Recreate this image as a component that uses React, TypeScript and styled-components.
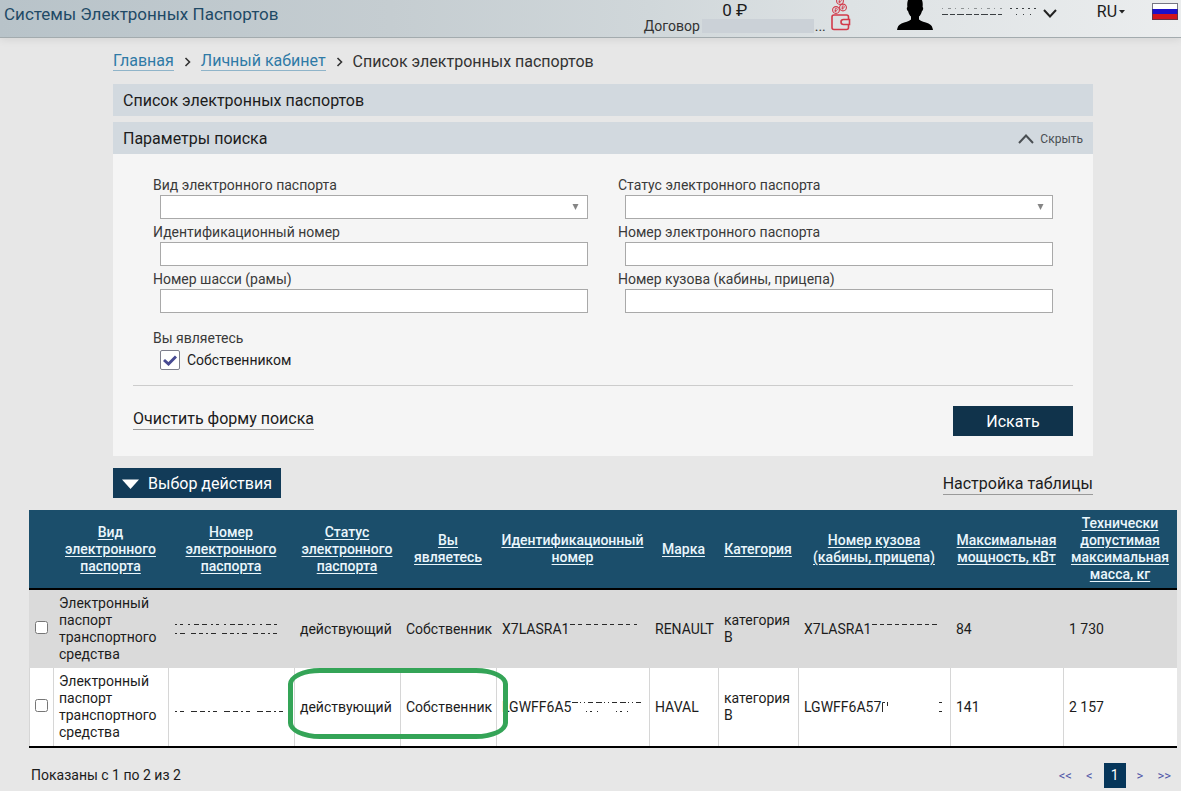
import React, { useId } from 'react';
import styled, { createGlobalStyle } from 'styled-components';

const GlobalStyle = createGlobalStyle`
  *, *::before, *::after { box-sizing: border-box; }
  body {
    margin: 0;
    background: #e7e7e7;
    color: #1c1c1c;
    font: 14px/17px Roboto, "Liberation Sans", sans-serif;
  }
  button, input, select { font: inherit; color: inherit; margin: 0; }
  a { color: inherit; text-decoration: none; }
`;

const Header = styled.header`
  display: flex;
  align-items: flex-start;
  height: 38px;
  border-bottom: 1px solid #a3abae;
  background: linear-gradient(90deg, #b8c3c9 0%, #c5cdd1 33%, #d0d7da 55%, #dde2e4 72%, #ebedee 100%);
  box-shadow: 0 2px 8px rgba(0, 0, 0, 0.08);
`;

const Brand = styled.div`
  flex: 1;
  padding: 4px 0 0 4px;
  font-size: 17px;
  line-height: 20px;
  color: #1f4a66;
`;

const Account = styled.div`
  display: flex;
  flex-direction: column;
  align-items: center;
  width: 182px;
  margin-right: 5px;
`;

const Balance = styled.div`
  font-size: 17px;
  line-height: 18px;
  padding-top: 1px;
`;

const Contract = styled.div`
  display: flex;
  width: 100%;
  color: #333;
  line-height: 14px;
`;

const ContractMask = styled.span`
  flex: 1;
  height: 14px;
  margin: 0 1px 0 2px;
  background: #cbd1d7;
`;

const WalletButton = styled.button`
  padding: 0;
  border: 0;
  background: none;
  margin-right: 46px;
  svg { display: block; }
`;

const UserButton = styled.button`
  display: flex;
  align-items: flex-start;
  padding: 0;
  border: 0;
  background: none;
  margin-right: 40px;
  svg { display: block; }
`;

const NameTrace = styled.span`
  margin: 6px 7px 0 9px;
`;

const ChevronBox = styled.span`
  margin-top: 9px;
`;

const Language = styled.button`
  display: flex;
  align-items: center;
  gap: 2px;
  padding: 2px 0 0;
  border: 0;
  background: none;
  font-size: 16px;
  line-height: 20px;
  margin-right: 27px;
`;

const Flag = styled.svg`
  display: block;
  margin: 3px 3px 0 0;
`;

const Content = styled.main`
  padding: 0 88px 0 113px;
`;

const Breadcrumbs = styled.nav`
  display: flex;
  align-items: center;
  gap: 10px;
  height: 46px;
  padding-top: 1px;
  font-size: 16px;
  line-height: 18px;
  color: #333;
`;

const Crumb = styled.a`
  color: #2f7aa6;
  border-bottom: 1px solid #8fb4c9;
`;

const TitleBar = styled.div`
  display: flex;
  align-items: center;
  justify-content: space-between;
  height: 32px;
  padding: 2px 10px 0;
  margin-bottom: 6px;
  background: #d2d9df;
`;

const PanelBar = styled(TitleBar)`
  margin-bottom: 0;
`;

const Heading = styled.h2`
  margin: 0;
  font-size: 16px;
  line-height: 20px;
  font-weight: 400;
`;

const HideButton = styled.button`
  display: flex;
  align-items: center;
  gap: 6px;
  padding: 0;
  border: 0;
  background: none;
  font-size: 12px;
  color: #4a4f53;
`;

const Panel = styled.form`
  padding: 18px 20px 20px;
  background: #f5f5f5;
`;

const Fields = styled.div`
  display: grid;
  grid-template-columns: 1fr 1fr;
  column-gap: 30px;
  padding: 0 20px;
`;

const FieldBox = styled.div`
  padding-top: 3px;
`;

const FieldLabel = styled.label`
  display: block;
  line-height: 20px;
  color: #3a3a3a;
`;

const Control = styled.div`
  position: relative;
  margin-left: 7px;
  height: 24px;
`;

const TextInput = styled.input`
  display: block;
  width: 100%;
  height: 24px;
  padding: 0 6px;
  border: 1px solid #a9a9a9;
  border-radius: 0;
  background: #fff;
`;

const Select = styled.select`
  display: block;
  width: 100%;
  height: 24px;
  padding: 0 24px 0 6px;
  border: 1px solid #a9a9a9;
  border-radius: 0;
  background: #fff;
  appearance: none;
`;

const SelectArrow = styled.svg`
  position: absolute;
  right: 9px;
  top: 9px;
  pointer-events: none;
`;

const Role = styled.fieldset`
  margin: 0;
  padding: 15px 20px 15px;
  border: 0;
  border-bottom: 1px solid #ccc;
`;

const RoleTitle = styled.div`
  line-height: 20px;
  color: #3a3a3a;
  margin-bottom: 2px;
`;

const CheckLabel = styled.label`
  display: flex;
  align-items: center;
  gap: 7px;
  margin-left: 7px;
`;

const CheckWrap = styled.span`
  display: grid;
  > * { grid-area: 1 / 1; }
  svg { place-self: center; pointer-events: none; }
  input:not(:checked) + svg { visibility: hidden; }
`;

const BigCheck = styled.input`
  width: 20px;
  height: 20px;
  appearance: none;
  border: 1px solid #7d7f8c;
  border-radius: 2px;
  background: #fff;
`;

const PanelActions = styled.div`
  display: flex;
  justify-content: space-between;
  align-items: flex-start;
  padding-top: 20px;
`;

const TextLink = styled.a`
  font-size: 16px;
  line-height: 20px;
  border-bottom: 1px solid #9a9a9a;
`;

const ClearLink = styled(TextLink)`
  margin-top: 3px;
`;

const SearchButton = styled.button`
  width: 120px;
  height: 30px;
  padding: 2px 0 0;
  border: 0;
  background: #10334b;
  color: #fff;
  font-size: 16px;
  line-height: 20px;
`;

const Toolbar = styled.div`
  display: flex;
  justify-content: space-between;
  align-items: center;
  padding: 12px 0;
`;

const TableLink = styled(TextLink)`
  margin-top: 2px;
`;

const ActionButton = styled.button`
  display: flex;
  align-items: center;
  justify-content: center;
  gap: 9px;
  width: 168px;
  height: 30px;
  padding: 2px 0 0;
  border: 0;
  background: #123b58;
  color: #fff;
  font-size: 16px;
  line-height: 20px;
`;

const TableArea = styled.section`
  padding: 0 4px 0 29px;
`;

const Table = styled.table`
  width: 100%;
  table-layout: fixed;
  border-collapse: separate;
  border-spacing: 0;
  border-bottom: 2px solid #000;
`;

const Col = styled.col<{ $w: number }>`
  width: ${p => p.$w}px;
`;

const Th = styled.th`
  height: 80px;
  padding: 5px;
  border-bottom: 2px solid #000;
  background: #1b4e6b;
  color: #eaf6fc;
  font-weight: 500;
  text-align: center;
  vertical-align: middle;
  a { text-decoration: underline; text-underline-offset: 2px; }
`;

const Row = styled.tr<{ $shaded?: boolean }>`
  background: ${p => (p.$shaded ? '#dadada' : '#fff')};
  td { border-left: 1px solid ${p => (p.$shaded ? 'transparent' : '#d6d6d6')}; }
`;

const Td = styled.td`
  position: relative;
  height: 78px;
  padding: 5px 0 5px 5px;
  vertical-align: middle;
`;

const CheckTd = styled(Td)`
  padding: 0;
  text-align: center;
  input { display: block; width: 13px; height: 13px; margin: 0 auto 4px; }
`;

const Value = styled.span`
  display: flex;
  align-items: center;
`;

const Highlight = styled.span`
  position: absolute;
  z-index: 1;
  left: -7px;
  right: -108px;
  top: 0;
  bottom: 7px;
  border: 5px solid #34a457;
  border-radius: 32px / 16px;
  pointer-events: none;
`;

const Footer = styled.footer`
  display: flex;
  justify-content: space-between;
  align-items: center;
  padding: 15px 6px 3px 2px;
`;

const Pager = styled.nav`
  display: flex;
  align-items: center;
  gap: 14px;
  font-size: 13px;
  color: #5157a8;
`;

const CurrentPage = styled.a`
  width: 22px;
  height: 25px;
  margin: 0 -3px;
  background: #06365a;
  color: #fff;
  font-size: 14px;
  line-height: 25px;
  text-align: center;
`;

/* Remains of a masked value: broken strokes along the top and the bottom of the line. */
function Trace({ width, top, bottom }: { width: number; top?: string; bottom?: string }) {
  return (
    <svg width={width} height="12" fill="none" stroke="#2a2a2a" aria-hidden="true">
      {top && <path d={`M1 1.5H${width}`} strokeDasharray={top} />}
      {bottom && <path d={`M1 10.5H${width}`} strokeDasharray={bottom} />}
    </svg>
  );
}

function Field({ label, select }: { label: string; select?: boolean }) {
  const id = useId();
  return (
    <FieldBox>
      <FieldLabel htmlFor={id}>{label}</FieldLabel>
      <Control>
        {select ? (
          <>
            <Select id={id}><option value="" /></Select>
            <SelectArrow width="7" height="6" fill="#858585"><path d="M0.5 0h6L3.5 6z" /></SelectArrow>
          </>
        ) : (
          <TextInput id={id} type="text" />
        )}
      </Control>
    </FieldBox>
  );
}

const Separator = () => (
  <svg width="7" height="10" fill="none" stroke="#333" strokeWidth="1.6" aria-hidden="true">
    <path d="M1.5 1l4 4-4 4" />
  </svg>
);

const Coin = ({ x, y }: { x: number; y: number }) => (
  <g transform={`translate(${x} ${y})`}>
    <circle r="3.4" strokeWidth="1.1" />
    <path d="M-0.7 2V-1.6H0.4a1 1 0 0 1 0 2H-1.3M-1.3 1.2H0.5" strokeWidth="0.8" />
  </g>
);

const columns: { title: string; width: number }[] = [
  { title: 'Вид электронного паспорта', width: 115 },
  { title: 'Номер электронного паспорта', width: 126 },
  { title: 'Статус электронного паспорта', width: 106 },
  { title: 'Вы являетесь', width: 96 },
  { title: 'Идентификационный номер', width: 153 },
  { title: 'Марка', width: 69 },
  { title: 'Категория', width: 80 },
  { title: 'Номер кузова (кабины, прицепа)', width: 152 },
  { title: 'Максимальная мощность, кВт', width: 113 },
  { title: 'Технически допустимая максимальная масса, кг', width: 114 },
];

type Passport = {
  number: React.ReactNode;
  vin: React.ReactNode;
  brand: string;
  body: React.ReactNode;
  power: string;
  mass: string;
  marked?: boolean;
};

const passports: Passport[] = [
  {
    number: <Trace width={103} top="2 3 3 5 2 4 5 3 5 4" bottom="2 3 5 6 5 3 4 3" />,
    vin: <>X7LASRA1<Trace width={68} top="5 3 4 4" /></>,
    brand: 'RENAULT',
    body: <>X7LASRA1<Trace width={68} top="5 3 4 3" /></>,
    power: '84',
    mass: '1 730',
  },
  {
    number: <Trace width={112} bottom="2 3 4 7 6 3 5 3" />,
    vin: <>LGWFF6A5<Trace width={70} top="6 2 1 3 1 3 5 3" bottom="0 14 1 3 2 5 1 4" /></>,
    brand: 'HAVAL',
    body: (
      <>
        LGWFF6A57
        <svg width="64" height="12" fill="none" stroke="#2a2a2a" aria-hidden="true">
          <path d="M1.500 11V1.500h2.500M6.500 1v4M58 1.500h3M58 10.500h3" />
        </svg>
      </>
    ),
    power: '141',
    mass: '2 157',
    marked: true,
  },
];

export default function App() {
  return (
    <>
      <GlobalStyle />
      <Header>
        <Brand>Системы Электронных Паспортов</Brand>
        <Account>
          <Balance>0 ₽</Balance>
          <Contract>Договор<ContractMask />...</Contract>
        </Account>
        <WalletButton type="button" aria-label="Пополнить счёт">
          <svg width="20" height="32" viewBox="0 0 20 32" fill="none" stroke="#d23a4a">
            <Coin x={9} y={1} />
            <Coin x={5} y={10} />
            <Coin x={12} y={7.5} />
            <path d="M17.5 19v-2a2 2 0 0 0-2-2H3a2 2 0 0 0-2 2v10.500a2 2 0 0 0 2 2h12.500a2 2 0 0 0 2-2V25" strokeWidth="1.600" />
            <path d="M18.500 19.500h-6a2.500 2.500 0 0 0 0 5h6z" strokeWidth="1.600" />
          </svg>
        </WalletButton>
        <UserButton type="button" aria-label="Меню пользователя">
          <svg width="36" height="30" viewBox="0 0 36 30" fill="#000">
            <path d="M11 0h14c1 3 .8 5 .6 7 1 .6.8 3-.8 4.500-.6 2.500-1.600 4-2.800 5v3c2 2 6 2.500 9.500 4 3 1.300 4 3.500 4.500 6.500H0c.5-3 1.500-5.200 4.500-6.500C8 22 12 21.500 14 19.500v-3c-1.200-1-2.200-2.500-2.800-5C9.600 10 9.400 7.600 10.400 7 10.200 5 10 3 11 0z" />
          </svg>
          <NameTrace>
            <svg width="94" height="12" fill="none" stroke="#3a3f42" aria-hidden="true">
              <path d="M0 2.500h60" strokeDasharray="1 5 3 4" strokeOpacity="0.5" />
              <path d="M0 8.500h60" strokeDasharray="6 2 5 2 7 2" />
              <path d="M68 2.500h26" strokeDasharray="2 4" />
              <path d="M74 8.500h20" strokeDasharray="1 6" />
            </svg>
          </NameTrace>
          <ChevronBox>
            <svg width="14" height="9" fill="none" stroke="#222" strokeWidth="2"><path d="M1 1l6 6.500L13 1" /></svg>
          </ChevronBox>
        </UserButton>
        <Language type="button">
          RU
          <svg width="6" height="4" fill="#222"><path d="M0 0h6L3 3.500z" /></svg>
        </Language>
        <Flag width="26" height="17" role="img" aria-label="Россия">
          <rect width="26" height="17" fill="#fff" />
          <rect y="6" width="26" height="6" fill="#1d10c8" />
          <rect y="11" width="26" height="6" fill="#d2151c" />
          <rect x="0.5" y="0.5" width="25" height="16" fill="none" stroke="#3c3c50" strokeOpacity="0.7" />
        </Flag>
      </Header>

      <Content>
        <Breadcrumbs>
          <Crumb href="#">Главная</Crumb>
          <Separator />
          <Crumb href="#">Личный кабинет</Crumb>
          <Separator />
          <span>Список электронных паспортов</span>
        </Breadcrumbs>

        <TitleBar><Heading>Список электронных паспортов</Heading></TitleBar>
        <PanelBar>
          <Heading>Параметры поиска</Heading>
          <HideButton type="button">
            <svg width="16" height="10" fill="none" stroke="#4a4f53" strokeWidth="2"><path d="M1 9l7-7.500L15 9" /></svg>
            Скрыть
          </HideButton>
        </PanelBar>

        <Panel onSubmit={e => e.preventDefault()}>
          <Fields>
            <Field label="Вид электронного паспорта" select />
            <Field label="Статус электронного паспорта" select />
            <Field label="Идентификационный номер" />
            <Field label="Номер электронного паспорта" />
            <Field label="Номер шасси (рамы)" />
            <Field label="Номер кузова (кабины, прицепа)" />
          </Fields>
          <Role>
            <RoleTitle>Вы являетесь</RoleTitle>
            <CheckLabel>
              <CheckWrap>
                <BigCheck type="checkbox" defaultChecked />
                <svg width="14" height="11" fill="none" stroke="#474a92" strokeWidth="3"><path d="M1 5l4.500 4L13 1.500" /></svg>
              </CheckWrap>
              Собственником
            </CheckLabel>
          </Role>
          <PanelActions>
            <ClearLink href="#">Очистить форму поиска</ClearLink>
            <SearchButton type="submit">Искать</SearchButton>
          </PanelActions>
        </Panel>

        <Toolbar>
          <ActionButton type="button">
            <svg width="17" height="10" fill="#fff"><path d="M0 0.500h17L8.500 10z" /></svg>
            Выбор действия
          </ActionButton>
          <TableLink href="#">Настройка таблицы</TableLink>
        </Toolbar>
      </Content>

      <TableArea>
        <Table>
          <colgroup>
            <Col $w={24} />
            {columns.map(c => <Col key={c.title} $w={c.width} />)}
          </colgroup>
          <thead>
            <tr>
              <Th aria-label="Выбор" />
              {columns.map(c => <Th key={c.title} scope="col"><a href="#">{c.title}</a></Th>)}
            </tr>
          </thead>
          <tbody>
            {passports.map((p, i) => (
              <Row key={p.brand} $shaded={i % 2 === 0}>
                <CheckTd><input type="checkbox" aria-label={p.brand} /></CheckTd>
                <Td>Электронный паспорт транспортного средства</Td>
                <Td><Value>{p.number}</Value></Td>
                <Td>действующий{p.marked && <Highlight />}</Td>
                <Td>Собственник</Td>
                <Td><Value>{p.vin}</Value></Td>
                <Td>{p.brand}</Td>
                <Td>категория В</Td>
                <Td><Value>{p.body}</Value></Td>
                <Td>{p.power}</Td>
                <Td>{p.mass}</Td>
              </Row>
            ))}
          </tbody>
        </Table>
        <Footer>
          <span>Показаны с 1 по 2 из 2</span>
          <Pager aria-label="Страницы">
            <a href="#">&lt;&lt;</a>
            <a href="#">&lt;</a>
            <CurrentPage href="#" aria-current="page">1</CurrentPage>
            <a href="#">&gt;</a>
            <a href="#">&gt;&gt;</a>
          </Pager>
        </Footer>
      </TableArea>
    </>
  );
}
